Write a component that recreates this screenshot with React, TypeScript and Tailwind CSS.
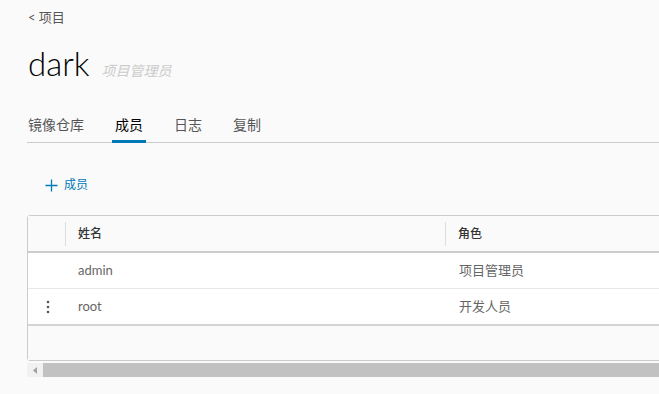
const sans = "font-['Lato','Noto_Sans_CJK_SC',sans-serif]"

const tabs = ['镜像仓库', '成员', '日志', '复制']

const members = [
  { name: 'admin', role: '项目管理员', menu: false },
  { name: 'root', role: '开发人员', menu: true },
]

function DotsIcon() {
  return (
    <svg width="4" height="14" viewBox="0 0 4 14" className="text-[#565656]">
      <circle cx="2" cy="2" r="1.3" fill="currentColor" />
      <circle cx="2" cy="7" r="1.3" fill="currentColor" />
      <circle cx="2" cy="12" r="1.3" fill="currentColor" />
    </svg>
  )
}

export default function App() {
  return (
    <div className={`min-h-screen w-full overflow-hidden bg-[#fafafa] ${sans}`}>
      <div className="w-[760px] pl-[27px]">
        {/* back link */}
        <div className="pt-[8px] pl-[1px] h-[20px] text-[13px] leading-[18px] text-[#565656]">
          &lt; 项目
        </div>

        {/* title */}
        <div className="mt-[23px] flex items-baseline pl-[1px]">
          <span className="text-[33px] leading-[40px] text-[#000] font-light">dark</span>
          <span className="ml-[12px] text-[14px] italic text-[#cccccc]">项目管理员</span>
        </div>

        {/* tabs */}
        <div className="mt-[32px] flex gap-[25px] border-b border-[#cccccc]">
          {tabs.map((t, i) => (
            <div
              key={t}
              className={`px-[3px] pb-[5px] text-[14px] leading-[20px] border-b-[3px] -mb-[1px] ${
                i === 0 ? 'ml-[-2px]' : ''
              } ${i === 1 ? 'border-[#0079b8] text-[#000]' : 'border-transparent text-[#565656]'}`}
            >
              {t}
            </div>
          ))}
        </div>

        {/* add member */}
        <div className="mt-[34px] ml-[18px] flex items-center gap-[6px] text-[#0079b8]">
          <svg width="13" height="13" viewBox="0 0 13 13">
            <path d="M6.5 0.5v12M0.5 6.5h12" stroke="currentColor" strokeWidth="1.3" fill="none" />
          </svg>
          <span className="text-[12px] leading-[16px]">成员</span>
        </div>

        {/* table */}
        <div className="mt-[22px]">
          <div className="border border-[#cccccc] rounded-tl-[3px] rounded-bl-[3px] bg-white">
            <div className="flex h-[37px] items-center bg-[#fafafa] border-b-2 border-[#cccccc] text-[12px] font-medium text-[#333]">
              <div className="w-[38px] h-[24px] border-r border-[#dddddd]" />
              <div className="w-[380px] pl-[12px] h-[24px] flex items-center border-r border-[#dddddd]">姓名</div>
              <div className="flex-1 pl-[12px]">角色</div>
            </div>
            {members.map((m, i) => (
              <div
                key={m.name}
                className={`flex items-center text-[13px] text-[#666666] ${
                  i === members.length - 1
                    ? 'h-[37px] border-b-2 border-[#d4d4d4]'
                    : 'h-[36px] border-b border-[#e8e8e8]'
                }`}
              >
                <div className="w-[38px] flex justify-center pl-[1px]">{m.menu && <DotsIcon />}</div>
                <div className="w-[381px] pl-[12px]">{m.name}</div>
                <div className="flex-1 pl-[12px]">{m.role}</div>
              </div>
            ))}
            <div className="h-[34px] bg-[#fafafa]" />
          </div>

          {/* horizontal scrollbar */}
          <div className="mt-[2px] flex h-[14px] bg-[#f1f1f1]">
            <div className="w-[16px] flex items-center justify-center">
              <svg width="4" height="7" viewBox="0 0 4 7">
                <path d="M4 0L0 3.5L4 7Z" fill="#a3a3a3" />
              </svg>
            </div>
            <div className="flex-1 bg-[#c1c1c1]" />
          </div>
        </div>
      </div>
    </div>
  )
}
